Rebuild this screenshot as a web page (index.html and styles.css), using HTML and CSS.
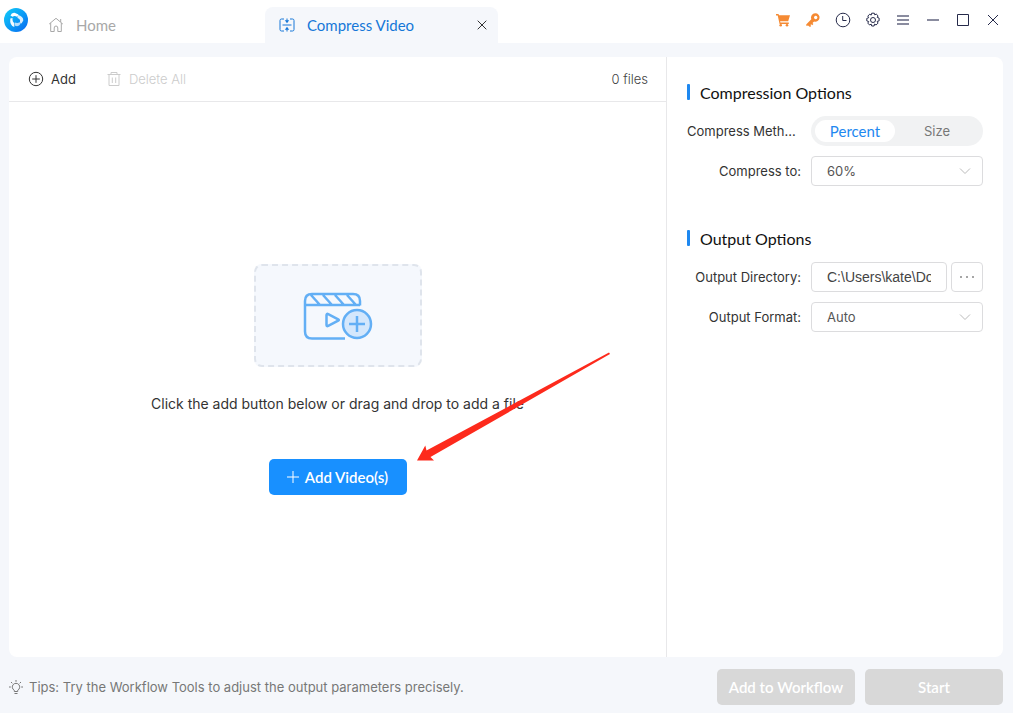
FILE: index.html
```html
<!DOCTYPE html>
<html lang="en">
<head>
<meta charset="utf-8">
<title>Compress Video</title>
<link rel="stylesheet" href="styles.css">
</head>
<body>
<div class="app">
  <header class="titlebar">
    <svg class="logo" viewBox="0 0 24 24" aria-hidden="true">
      <defs><linearGradient id="lg" x1="0" y1="0" x2="1" y2="1"><stop offset="0" stop-color="#12cdf8"/><stop offset=".55" stop-color="#0a98f5"/><stop offset="1" stop-color="#0866f0"/></linearGradient></defs>
      <circle cx="12" cy="12" r="12" fill="url(#lg)"/>
      <g fill="#fff">
        <path d="M6.500 7.500Q7.500 4.500 10.500 4.800L14.500 6.500 13 8.800Q10.500 7.300 8.500 8.800z"/>
        <path d="M13.500 6.800Q19.500 8.500 19.300 12.500L17.500 15.500 15.800 14.500Q17 11 13.500 10z" opacity=".85"/>
        <path d="M16.800 15.500Q14.500 19.500 10.800 17.500L10.800 14.500Q13.500 15.500 15.500 14.300z" opacity=".7"/>
        <path d="M6.300 10.500 8.500 10Q8.300 14 10.300 15V19Q5.500 17.500 6.300 10.500z" opacity=".95"/>
      </g>
    </svg>
    <a class="tab home" href="#">
      <svg class="i16" viewBox="0 0 16 16" aria-hidden="true"><path d="M1.200 7 8 1.300 14.800 7M2.700 6v8.500h3.500V11q0-2 1.800-2t1.800 2v3.500h3.500V6M12.700 5V2"/></svg>
      <span>Home</span>
    </a>
    <div class="tab active">
      <svg class="i16" viewBox="0 0 16 16" aria-hidden="true"><path d="M5 2H2.500Q1 2 1 3.500v9Q1 14 2.500 14H5M11 2h2.500Q15 2 15 3.500v9q0 1.500-1.500 1.500H11M3.500 8h9M8 1.500v3M8 14.500v-3"/><path class="solid" d="M5.800 3.300h4.400L8 6.300zM5.800 12.700h4.400L8 9.700z"/></svg>
      <span>Compress Video</span>
      <button class="icon-btn close-tab" type="button" aria-label="Close tab"><svg class="i10" viewBox="0 0 10 10"><path d="M.7.700 9.300 9.300M9.300.7.700 9.300"/></svg></button>
    </div>
    <nav class="window-tools" aria-label="Window">
      <button class="icon-btn orange" type="button" aria-label="Shop"><svg class="i16" viewBox="0 0 16 16"><path class="solid" d="M1 2h2.500l.5 1.200h11L13.200 9.300H5.100l.4 1.300h8.300V12H4.600L2.700 3.400H1z"/><circle class="solid" cx="5.700" cy="13.300" r="1.300"/><circle class="solid" cx="12" cy="13.300" r="1.300"/></svg></button>
      <button class="icon-btn orange" type="button" aria-label="License"><svg class="i16" viewBox="0 0 16 16"><path class="solid" fill-rule="evenodd" d="M10.300 1.300a4.200 4.200 0 1 1-1.200 8.200l-1.600 1.600.9.900-1.200 1.200-1-.9-.8.800.8.800-1.200 1.200-2-1.600-1.500.5-.3-1.600L6.300 7.200a4.200 4.200 0 0 1 4-5.900zM10.700 3.800a1.700 1.700 0 1 0 .01 0z"/></svg></button>
      <button class="icon-btn" type="button" aria-label="History"><svg class="i16" viewBox="0 0 16 16"><circle cx="8" cy="8" r="6.800"/><path d="M7.700 4v4.500H11.500"/></svg></button>
      <button class="icon-btn" type="button" aria-label="Settings"><svg class="i16" viewBox="0 0 16 16"><circle cx="8" cy="8" r="2.500"/><path d="M6.700 1.200h2.600l.5 1.700 1.400-.9 1.900 1.900-.9 1.400 1.900.8v2.800l-1.900.5.8 1.700-1.900 1.900-1.600-.9-.4 1.900H6.700l-.5-1.900-1.600.9-1.800-1.900.9-1.600-1.900-.6V6.400l1.900-.7-.9-1.600 1.900-1.900 1.500.9z"/></svg></button>
      <button class="icon-btn muted" type="button" aria-label="Menu"><svg class="i16" viewBox="0 0 16 16"><path d="M2 4h12M2 8h12M2 12h12"/></svg></button>
      <button class="icon-btn muted" type="button" aria-label="Minimize"><svg class="i16" viewBox="0 0 16 16"><path d="M2 8h12"/></svg></button>
      <button class="icon-btn" type="button" aria-label="Maximize"><svg class="i16" viewBox="0 0 16 16"><path d="M2.500 2.500h11v11h-11z"/></svg></button>
      <button class="icon-btn" type="button" aria-label="Close"><svg class="i16" viewBox="0 0 16 16"><path d="M3 3 13 13M13 3 3 13"/></svg></button>
    </nav>
  </header>

  <main class="panel">
    <section class="files">
      <div class="toolbar">
        <button class="tool" type="button"><svg class="i16" viewBox="0 0 16 16"><circle cx="8" cy="8" r="6.700"/><path d="M4.200 8h7.600M8 4.200v7.600"/></svg>Add</button>
        <button class="tool" type="button" disabled><svg class="i16" viewBox="0 0 16 16"><path d="M1.500 3.500h13M5 3.500v-2h6v2M3 3.500v11h10v-11M6.300 6.500v5.500M9.700 6.500v5.500"/></svg>Delete All</button>
        <span class="count">0 files</span>
      </div>
      <div class="stage">
        <div class="empty">
          <div class="drop">
            <svg class="clap" viewBox="0 0 70 48" aria-hidden="true">
              <path d="M42 46.500H9Q2 46.500 2 39.500V9Q2 2 9 2H50Q57 2 57 9V13.500M2 13H57M8 3l9 10M20 3l9 10M32 3l9 10M44 3l9 10"/>
              <path d="M23.500 23.300q0-2 1.700-1.200l10 5.200q1.300.7 0 1.400l-10 5.200q-1.700.8-1.700-1.200z"/>
              <circle cx="54" cy="32" r="14" fill="#d4e7fc"/>
              <path d="M46 32h16M54 24v16"/>
            </svg>
          </div>
          <p class="hint">Click the add button below or drag and drop to add a file</p>
          <button class="primary" type="button"><svg class="i12" viewBox="0 0 12 12"><path d="M0 6h12M6 0v12"/></svg>Add Video(s)</button>
          <svg class="pointer" viewBox="0 0 194 110" aria-hidden="true"><path d="M0 108.500 8.300 93.500 9.500 98.500 192 .5 193 2 13.500 105 17 108.500z"/></svg>
        </div>
      </div>
    </section>

    <aside class="options">
      <h2>Compression Options</h2>
      <div class="row">
        <span class="label cut" id="method">Compress Meth...</span>
        <div class="segmented" role="group" aria-labelledby="method">
          <button class="seg on" type="button" aria-pressed="true">Percent</button>
          <button class="seg" type="button" aria-pressed="false">Size</button>
        </div>
      </div>
      <div class="row">
        <label class="label" for="ratio">Compress to:</label>
        <div class="field">
          <select id="ratio"><option>60%</option></select>
          <svg class="chev" viewBox="0 0 12 8" aria-hidden="true"><path d="M1 1.500 6 6.500 11 1.500"/></svg>
        </div>
      </div>
      <h2 class="second">Output Options</h2>
      <div class="row">
        <label class="label" for="dir">Output Directory:</label>
        <div class="field pair">
          <input id="dir" type="text" value="C:\Users\kate\Documents">
          <button class="browse" type="button" aria-label="Browse"><svg class="i16" viewBox="0 0 16 16"><circle cx="2" cy="8" r="1"/><circle cx="8" cy="8" r="1"/><circle cx="14" cy="8" r="1"/></svg></button>
        </div>
      </div>
      <div class="row">
        <label class="label" for="format">Output Format:</label>
        <div class="field">
          <select id="format"><option>Auto</option></select>
          <svg class="chev" viewBox="0 0 12 8" aria-hidden="true"><path d="M1 1.500 6 6.500 11 1.500"/></svg>
        </div>
      </div>
    </aside>
  </main>

  <footer class="footer">
    <svg class="i14" viewBox="0 0 14 14" aria-hidden="true"><path d="M5.300 10.300a3.700 3.700 0 1 1 3.400 0v1.200H5.300zM5.500 13.500h3M0 7h1.800M12.200 7H14M7 0v1.800M2 2l1.300 1.300M12 2l-1.300 1.300"/></svg>
    <p class="tips">Tips: Try the Workflow Tools to adjust the output parameters precisely.</p>
    <button class="action" type="button" disabled>Add to Workflow</button>
    <button class="action" type="button" disabled>Start</button>
  </footer>
</div>
</body>
</html>
```

FILE: styles.css
```css
* { box-sizing: border-box; }
body {
  margin: 0;
  background: #f5f7fb;
  color: #333;
  font-family: Inter, "Liberation Sans", sans-serif;
  font-size: 13px;
  font-weight: 400;
}
button, input, select { font: inherit; color: inherit; margin: 0; }
button { border: 0; background: none; padding: 0; }
p, h2 { margin: 0; }
svg { fill: none; stroke: currentColor; stroke-width: 1; flex: none; display: block; }
.i16 { width: 16px; height: 16px; }
.i14 { width: 14px; height: 14px; }
.i12 { width: 12px; height: 12px; }
.i10 { width: 10px; height: 10px; }
.solid { fill: currentColor; stroke: none; }

.app { min-height: 100vh; display: flex; flex-direction: column; }

.titlebar { display: flex; height: 43px; background: #fff; padding: 0 12px 0 4px; }
.logo { width: 24px; height: 24px; margin-top: 8px; stroke: none; }
.tab { display: flex; align-items: center; height: 36px; margin-top: 7px; font-family: Lato, sans-serif; font-size: 15px; font-weight: 400; text-decoration: none; }
.home { width: 237px; padding-left: 20px; gap: 12px; color: #a8a8a8; }
.active { width: 233px; padding: 0 10px 0 14px; gap: 12px; color: #1677d8; background: #f5f7fb; border-radius: 8px 8px 0 0; }
.icon-btn { display: grid; place-items: center; width: 16px; height: 16px; color: #262a4a; }
.close-tab { width: 12px; margin-left: auto; color: #333; }
.window-tools { display: flex; gap: 14px; margin: 12px 0 0 auto; }
.orange { color: #f58a33; }
.muted { color: #8a8c9f; }
.muted svg { stroke-width: 2; }

.panel { flex: 1; display: flex; margin: 14px 10px 0 9px; background: #fff; border-radius: 8px; }
.files { flex: 1; display: flex; flex-direction: column; }
.toolbar { display: flex; align-items: center; height: 45px; padding: 0 18px 0 19px; gap: 30px; border-bottom: 1px solid #e8e8ea; }
.tool { display: flex; align-items: center; gap: 7px; color: #333; }
.tool:disabled { color: #ccc; font-weight: 300; }
.count { margin-left: auto; color: #444; font-weight: 300; }
.stage { flex: 1; display: grid; place-items: center; }
.empty { position: relative; display: flex; flex-direction: column; align-items: center; }
.drop { display: grid; place-items: center; width: 168px; height: 103px; background: #f5f8fd; border: 2px dashed #dfe4ec; border-radius: 8px; }
.clap { width: 70px; height: 48px; color: #63aff5; stroke-width: 2.500; }
.hint { margin: 27px 0 45px; font-size: 14px; line-height: 20px; }
.primary { display: flex; align-items: center; justify-content: center; gap: 6px; width: 138px; height: 36px; border-radius: 5px; background: #1890ff; color: #fff; font-family: Lato, sans-serif; font-size: 15px; font-weight: 600; }
.pointer { position: absolute; left: calc(50% + 79px); top: 88px; width: 194px; height: 110px; fill: #fd2a1c; stroke: none; }

.options { width: 337px; padding: 25px 20px; border-left: 1px solid #e8e8ea; }
h2 { display: flex; align-items: center; height: 20px; margin-bottom: 14px; gap: 10px; color: #111; font-family: Lato, sans-serif; font-size: 16px; font-weight: 400; }
h2::before { content: ""; width: 3px; height: 16px; border-radius: 1px; background: #1e88f0; }
.second { margin-top: 42px; }
.row { display: flex; align-items: center; gap: 10px; height: 30px; }
.row + .row { margin-top: 10px; }
.label { flex: 1; text-align: right; white-space: nowrap; }
.cut { text-align: left; }
.segmented { display: flex; width: 172px; height: 30px; padding: 4px; border-radius: 15px; background: #f1f2f3; }
.seg { flex: 1; border-radius: 11px; color: #777; }
.on { flex: none; width: 80px; background: #fff; color: #1e88f0; font-family: Lato, sans-serif; font-size: 15px; font-weight: 400; }
.field { position: relative; width: 172px; height: 30px; }
.pair { display: flex; gap: 4px; }
select, input, .browse { width: 100%; height: 30px; border: 1px solid #dcdcde; border-radius: 4px; background: #fff; color: #555; }
select { appearance: none; padding: 0 15px; }
input { flex: 1; min-width: 0; padding: 0 15px; color: #444; font-family: "Liberation Sans", Arial, sans-serif; font-size: 14px; }
.browse { display: grid; place-items: center; width: 32px; }
.browse circle { fill: #888; stroke: none; }
.chev { position: absolute; right: 12px; top: 11px; width: 12px; height: 8px; color: #bbb; }

.footer { display: flex; align-items: center; padding: 12px 10px 8px 9px; color: #777; }
.tips { flex: 1; margin-left: 6px; }
.action { width: 138px; height: 36px; margin-left: 10px; border-radius: 5px; background: #d8d8d8; color: #fff; font-family: Lato, sans-serif; font-size: 15px; font-weight: 600; }
```
